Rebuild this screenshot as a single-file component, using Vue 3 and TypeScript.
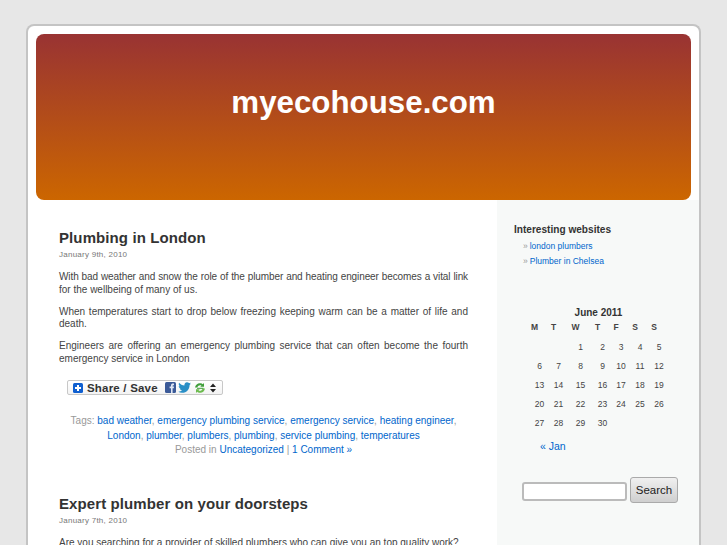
<script setup lang="ts">
const posts = [
  {
    title: "Plumbing in London",
    date: "January 9th, 2010",
    paragraphs: [
      "With bad weather and snow the role of the plumber and heating engineer becomes a vital link for the wellbeing of many of us.",
      "When temperatures start to drop below freezing keeping warm can be a matter of life and death.",
      "Engineers are offering an emergency plumbing service that can often become the fourth emergency service in London",
    ],
  },
];

const tags = [
  "bad weather",
  "emergency plumbing service",
  "emergency service",
  "heating engineer",
  "London",
  "plumber",
  "plumbers",
  "plumbing",
  "service plumbing",
  "temperatures",
];

const weekDays = ["M", "T", "W", "T", "F", "S", "S"];

// June 2011 starts on a Wednesday
const calendarRows = [
  ["", "", 1, 2, 3, 4, 5],
  [6, 7, 8, 9, 10, 11, 12],
  [13, 14, 15, 16, 17, 18, 19],
  [20, 21, 22, 23, 24, 25, 26],
  [27, 28, 29, 30, "", "", ""],
];
</script>

<template>
  <div class="page">
    <header class="masthead">
      <h1>myecohouse.com</h1>
    </header>

    <div class="columns">
      <main class="content">
        <article v-for="post in posts" :key="post.title" class="post">
          <h2>{{ post.title }}</h2>
          <small>{{ post.date }}</small>
          <p v-for="text in post.paragraphs" :key="text" class="post__text">{{ text }}</p>

          <!-- Share button -->
          <a class="share" href="#">
            <svg class="share__plus" width="10" height="10" viewBox="0 0 10 10">
              <rect width="10" height="10" rx="1.5" fill="#0f5fd0" />
              <path d="M5 2v6M2 5h6" stroke="#fff" stroke-width="2" />
            </svg>
            <span class="share__label">Share / Save</span>
            <svg class="share__fb" width="11" height="11" viewBox="0 0 11 11">
              <rect width="11" height="11" rx="1.5" fill="#3b5a98" />
              <path d="M6 11V6.2H4.600V4.600H6V3.500C6 2.200 6.800 1.600 8 1.600h1v1.600h-.7c-.5 0-.7.2-.7.7v.7h1.400l-.2 1.600H7.600V11z" fill="#dfe6f3" />
            </svg>
            <svg class="share__bird" width="13" height="11" viewBox="0 0 12 10">
              <path d="M12 1.200c-.4.2-.9.3-1.400.4.5-.3.9-.8 1.100-1.300-.5.3-1 .5-1.600.6C9.700.4 9 .1 8.300.1 7 .1 5.900 1.200 5.900 2.600c0 .2 0 .4.100.6C4 3 2.200 2 1 .6.800 1 .7 1.400.7 1.800c0 .9.400 1.600 1.100 2-.4 0-.8-.100-1.100-.3 0 1.200.8 2.200 2 2.400-.4.100-.8.100-1.100 0 .3 1 1.200 1.700 2.300 1.700C3 8.400 1.500 8.900 0 8.800 1.100 9.500 2.300 9.900 3.700 9.900c4.500 0 7-3.700 7-7v-.3c.5-.4.900-.8 1.300-1.400z" fill="#2a8fc6" />
            </svg>
            <svg class="share__sync" width="12" height="12" viewBox="0 0 12 12">
              <path d="M1 5.500C1.500 2.500 4 .8 6.500 1.200c1 .1 1.700.5 2.300 1L10 1v3.800H6.200l1.300-1.300C5.800 2.600 4 3.400 3.300 5.500z" fill="#3f9e3a" />
              <path d="M11 6.500c-.5 3-3 4.700-5.500 4.300-1-.1-1.700-.5-2.300-1L2 11V7.200h3.800L4.500 8.500c1.700.9 3.500.1 4.200-2z" fill="#6cbb4e" />
              <path d="M3 5.800h6.500v1H3z" fill="#3f9e3a" />
            </svg>
            <svg class="share__caret" width="6" height="10" viewBox="0 0 6 10">
              <path d="M3 .5 6 4H0zM3 9.500 0 6h6z" fill="#222" />
            </svg>
          </a>

          <p class="postmeta">
            Tags:
            <template v-for="(tag, i) in tags" :key="tag">
              <a href="#">{{ tag }}</a><template v-if="i < tags.length - 1">, </template>
            </template>
            <br />
            Posted in <a href="#">Uncategorized</a> | <a href="#">1 Comment »</a>
          </p>
        </article>

        <article class="post post--second">
          <h2>Expert plumber on your doorsteps</h2>
          <small>January 7th, 2010</small>
          <p>Are you searching for a provider of skilled plumbers who can give you an top quality work?</p>
        </article>
      </main>

      <aside class="sidebar">
        <h3>Interesting websites</h3>
        <ul class="links">
          <li><span>»</span><a href="#">london plumbers</a></li>
          <li><span>»</span><a href="#">Plumber in Chelsea</a></li>
        </ul>

        <div class="calendar">
          <div class="calendar__caption">June 2011</div>
          <div class="calendar__grid">
            <div v-for="(d, i) in weekDays" :key="i" class="calendar__head">{{ d }}</div>
            <template v-for="(row, r) in calendarRows" :key="r">
              <div v-for="(day, c) in row" :key="c" class="calendar__cell">{{ day }}</div>
            </template>
          </div>
          <a class="calendar__prev" href="#">« Jan</a>
        </div>

        <form class="search" @submit.prevent>
          <input type="text" />
          <button type="submit">Search</button>
        </form>
      </aside>
    </div>
  </div>
</template>

<style scoped>
.page {
  box-sizing: border-box;
  width: 675px;
  margin: 24px 0 0 26px;
  padding-top: 8px;
  background: #fff;
  border: 2px solid #c4c4c4;
  border-bottom: 0;
  border-radius: 8px 8px 0 0;
  font-family: "Liberation Sans", Arial, sans-serif;
  color: #333;
}
.masthead {
  display: flex;
  justify-content: center;
  height: 166px;
  margin: 0 8px;
  border-radius: 8px;
  background: linear-gradient(to bottom, #993333, #cc6600);
}
.masthead h1 {
  margin: 50px 0 0;
  font-size: 31.300px;
  line-height: 38px;
  font-weight: bold;
  color: #fff;
}
.columns {
  display: flex;
  height: 345px;
  overflow: hidden;
}
.content {
  box-sizing: border-box;
  width: 469px;
  padding: 28px 29px 0 31px;
  background: #fff;
}
.post h2 {
  margin: 0;
  font-size: 15px;
  line-height: 19px;
  font-weight: bold;
  letter-spacing: 0.1px;
  color: #333;
}
.post small {
  display: block;
  margin-top: 2px;
  font-size: 8px;
  line-height: 11px;
  color: #777;
  letter-spacing: 0.25px;
}
.post p {
  margin: 9.500px 0 0;
  font-size: 10px;
  line-height: 12.500px;
  text-align: justify;
  color: #444;
}
.post small + p {
  margin-top: 11px;
}
/* the first line has to hold "vital link" as well */
.post small + p.post__text::first-line {
  letter-spacing: -0.1px;
}
.share {
  display: flex;
  align-items: center;
  box-sizing: border-box;
  width: 156px;
  height: 15px;
  margin: 15px 0 0 8px;
  padding: 0 0 0 5px;
  background: linear-gradient(to bottom, #fff, #f3f3f3);
  border: 1px solid #c8c8c8;
  border-radius: 2px;
  text-decoration: none;
}
.share__label {
  width: 71px;
  margin: 0 7px 0 4px;
  font-size: 11.500px;
  font-weight: bold;
  letter-spacing: 0.2px;
  color: #333;
  white-space: nowrap;
}
.share__fb {
  margin-right: 2px;
}
.share__sync {
  margin: 0 4px 0 3px;
}
.post p.postmeta {
  margin-top: 19px;
  font-size: 10px;
  line-height: 14.500px;
  text-align: center;
  color: #999;
}
.postmeta a {
  color: #0066cc;
  text-decoration: none;
}
.post--second {
  margin-top: 36px;
}
.sidebar {
  box-sizing: border-box;
  width: 202px;
  padding: 24px 0 0 17px;
  background: #f7f9f8;
}
.sidebar h3 {
  margin: 0;
  font-size: 10.100px;
  line-height: 12px;
  font-weight: bold;
  color: #333;
}
.links {
  list-style: none;
  margin: 3px 0 0;
  padding: 0 0 0 9px;
}
.links li {
  font-size: 8.500px;
  line-height: 15px;
}
.links span {
  margin-right: 2px;
  color: #999;
}
.links a {
  color: #0066cc;
  text-decoration: none;
}
.calendar {
  margin: 38px 0 0 16px;
}
.calendar__caption {
  width: 137px;
  font-size: 10px;
  line-height: 12px;
  font-weight: bold;
  text-align: center;
  color: #333;
}
.calendar__grid {
  display: grid;
  grid-template-columns: 19px 19px 25px 19px 18px 20px 18px;
  grid-auto-rows: 19px;
  font-size: 8.500px;
}
.calendar__head {
  padding: 3px 10px 0 0;
  box-sizing: border-box;
  height: 22px;
  text-align: center;
  font-weight: bold;
  line-height: 10px;
  color: #444;
}
.calendar__cell {
  text-align: center;
  line-height: 19px;
  color: #444;
}
.calendar__prev {
  display: block;
  margin: 6px 0 0 10px;
  font-size: 10.500px;
  line-height: 14px;
  color: #0066cc;
  text-decoration: none;
}
.search {
  display: flex;
  align-items: center;
  gap: 3px;
  margin: 24px 0 0 8px;
}
.search input {
  box-sizing: border-box;
  width: 105px;
  height: 19px;
  margin: 2px 0 0;
  padding: 0;
  background: #fff;
  border: 2px solid #bbb;
  border-radius: 3px;
}
.search button {
  box-sizing: border-box;
  width: 48px;
  height: 26px;
  padding: 0;
  background: linear-gradient(to bottom, #f0f0f0, #cfcfcf);
  border: 1px solid #aaa;
  border-radius: 3px;
  font-family: "Liberation Sans", Arial, sans-serif;
  font-size: 11.500px;
  color: #222;
}
</style>

<style>
html,
body {
  margin: 0;
  height: 545px;
  overflow: hidden;
  background: #e7e7e7;
}
</style>
